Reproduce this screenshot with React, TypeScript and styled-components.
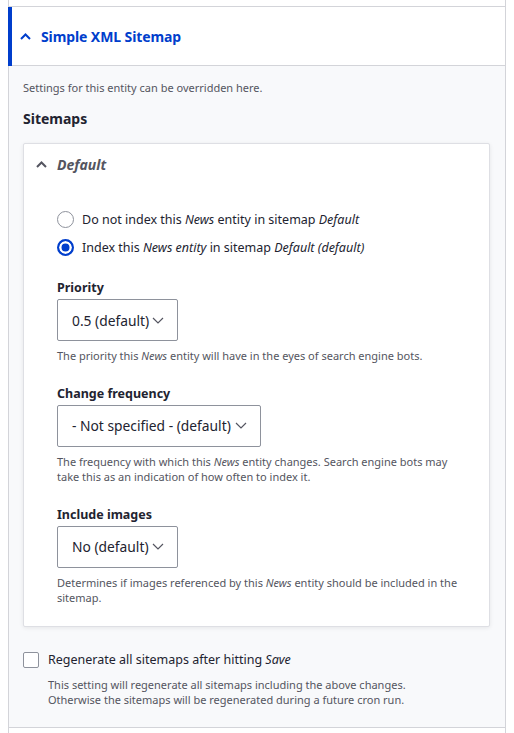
import React from 'react';
import styled, { createGlobalStyle } from 'styled-components';

// Styles

const GlobalStyle = createGlobalStyle`
    html, body {
        margin: 0;
        padding: 0;
        background: #ffffff;
    }
    body {
        font-family: "Noto Sans", "Open Sans", sans-serif;
        color: #222330;
        -webkit-font-smoothing: antialiased;
    }
`
const Page = styled.div`
    margin-left: 8px;
    width: 498px;
    border-left: 1px solid #d3d4d9;
    border-right: 1px solid #d3d4d9;
    box-sizing: border-box;
`
const PrevItem = styled.div`
    height: 6px;
    border-bottom: 1px solid #d3d4d9;
`
const NextItem = styled.div`
    height: 8px;
`
const Details = styled.div`
    border-bottom: 1px solid #d3d4d9;
    background: #f8f9fb;
`
const Summary = styled.div`
    position: relative;
    display: flex;
    align-items: center;
    gap: 10px;
    height: 59px;
    padding-left: 11px;
    background: #ffffff;
    border-bottom: 1px solid #d3d4d9;
    box-sizing: border-box;
    &::before {
        content: '';
        position: absolute;
        left: -1px;
        top: 0;
        bottom: -1px;
        width: 4px;
        background: #003ecc;
    }
`
const SummaryTitle = styled.span`
    font-size: 14px;
    font-weight: 700;
    color: #003ecc;
    letter-spacing: -0.1px;
`
const Content = styled.div`
    padding: 13px 15px 19px 14px;
`
const Intro = styled.p`
    margin: 0;
    font-size: 11px;
    line-height: 18px;
    color: #545560;
`
const SectionTitle = styled.h3`
    margin: 12px 0 14px;
    font-size: 14px;
    line-height: 20px;
    font-weight: 700;
`
const Card = styled.div`
    background: #ffffff;
    border: 1px solid #dedfe4;
    border-radius: 2px;
    box-shadow: 0 1px 4px rgba(0, 0, 0, 0.08);
    padding-bottom: 20px;
`
const CardSummary = styled.div`
    display: flex;
    align-items: center;
    gap: 10px;
    height: 41px;
    padding-left: 12px;
`
const CardTitle = styled.span`
    font-size: 14px;
    font-weight: 700;
    font-style: italic;
    color: #545560;
`
const CardBody = styled.div`
    padding: 20px 20px 0 33px;
`
const RadioRow = styled.label`
    display: flex;
    align-items: center;
    gap: 8px;
    height: 28px;
    font-size: 12.5px;
    color: #222330;
`
const Radio = styled.span<{ $checked?: boolean }>`
    width: 17px;
    height: 17px;
    border-radius: 50%;
    box-sizing: border-box;
    flex-shrink: 0;
    border: ${p => (p.$checked ? '2px solid #003ecc' : '1px solid #8e929c')};
    background: ${p => (p.$checked ? '#003ecc' : '#ffffff')};
    box-shadow: ${p => (p.$checked ? 'inset 0 0 0 2.5px #ffffff' : 'none')};
`
const Field = styled.div`
    margin-top: 21px;
    &:first-of-type {
        margin-top: 18px;
    }
`
const FieldLabel = styled.div`
    font-size: 12.5px;
    line-height: 18px;
    font-weight: 700;
    margin-bottom: 2px;
`
const Select = styled.div<{ $width: number }>`
    display: flex;
    align-items: center;
    justify-content: space-between;
    gap: 2px;
    width: ${p => p.$width}px;
    height: 42px;
    padding: 0 13px 0 14px;
    box-sizing: border-box;
    border: 1px solid #8e929c;
    border-radius: 2px;
    font-size: 13.8px;
    white-space: nowrap;
    color: #222330;
    svg {
        flex-shrink: 0;
    }
`
const Description = styled.div`
    margin-top: 7px;
    font-size: 11px;
    line-height: 15.5px;
    color: #545560;
`
const CheckRow = styled.label`
    display: flex;
    align-items: center;
    gap: 9px;
    margin-top: 23px;
    height: 20px;
    font-size: 12.5px;
`
const Checkbox = styled.span`
    width: 16px;
    height: 16px;
    box-sizing: border-box;
    border: 1px solid #8e929c;
    border-radius: 2px;
    background: #ffffff;
`
const CheckDescription = styled(Description)`
    margin-left: 25px;
    margin-top: 7px;
`

// Icons

const ChevronUp = ({ color }: { color: string }) => (
    <svg width="11" height="7" viewBox="0 0 11 7">
        <path d="M1 6 L5.5 1.5 L10 6" fill="none" stroke={color} strokeWidth="2" />
    </svg>
)

const ChevronDown = () => (
    <svg width="12" height="7" viewBox="0 0 12 7">
        <path d="M1 1 L6 6 L11 1" fill="none" stroke="#545560" strokeWidth="1.2" />
    </svg>
)

const App = () => {
    return (
        <>
            <GlobalStyle />
            <Page>
                <PrevItem />
                <Details>
                    <Summary>
                        <ChevronUp color="#003ecc" />
                        <SummaryTitle>Simple XML Sitemap</SummaryTitle>
                    </Summary>
                    <Content>
                        <Intro>Settings for this entity can be overridden here.</Intro>
                        <SectionTitle>Sitemaps</SectionTitle>

                        <Card>
                            <CardSummary>
                                <ChevronUp color="#545560" />
                                <CardTitle>Default</CardTitle>
                            </CardSummary>
                            <CardBody>
                                <RadioRow>
                                    <Radio />
                                    <span>Do not index this <em>News</em> entity in sitemap <em>Default</em></span>
                                </RadioRow>
                                <RadioRow>
                                    <Radio $checked />
                                    <span>Index this <em>News entity</em> in sitemap <em>Default (default)</em></span>
                                </RadioRow>

                                <Field>
                                    <FieldLabel>Priority</FieldLabel>
                                    <Select $width={121}>
                                        <span>0.5 (default)</span>
                                        <ChevronDown />
                                    </Select>
                                    <Description>
                                        The priority this <em>News</em> entity will have in the eyes of search engine bots.
                                    </Description>
                                </Field>

                                <Field>
                                    <FieldLabel>Change frequency</FieldLabel>
                                    <Select $width={204}>
                                        <span>- Not specified - (default)</span>
                                        <ChevronDown />
                                    </Select>
                                    <Description>
                                        The frequency with which this <em>News</em> entity changes. Search engine bots may
                                        take this as an indication of how often to index it.
                                    </Description>
                                </Field>

                                <Field>
                                    <FieldLabel>Include images</FieldLabel>
                                    <Select $width={121}>
                                        <span>No (default)</span>
                                        <ChevronDown />
                                    </Select>
                                    <Description>
                                        Determines if images referenced by this <em>News</em> entity should be included in the
                                        sitemap.
                                    </Description>
                                </Field>
                            </CardBody>
                        </Card>

                        <CheckRow>
                            <Checkbox />
                            <span>Regenerate all sitemaps after hitting <em>Save</em></span>
                        </CheckRow>
                        <CheckDescription>
                            This setting will regenerate all sitemaps including the above changes.
                            <br />
                            Otherwise the sitemaps will be regenerated during a future cron run.
                        </CheckDescription>
                    </Content>
                </Details>
                <NextItem />
            </Page>
        </>
    );
};

export default App;
